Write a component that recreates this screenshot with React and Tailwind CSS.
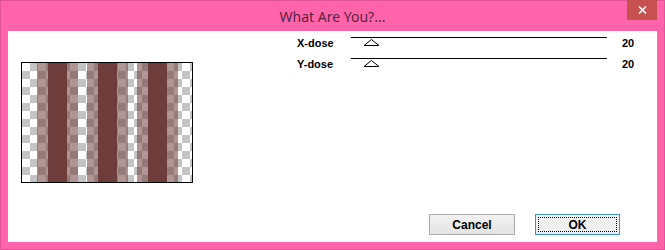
import React from "react";

function Preview() {
  const stripes = [0, 50, 100];
  return (
    <svg width="170" height="119" viewBox="0 0 170 119" className="block">
      <defs>
        <pattern id="chk" width="16" height="16" patternUnits="userSpaceOnUse">
          <rect width="16" height="16" fill="#c3c3c3" />
          <rect x="0" y="0" width="8" height="8" fill="#ffffff" />
          <rect x="8" y="8" width="8" height="8" fill="#ffffff" />
        </pattern>
        <filter id="soft" x="0" y="0" width="100%" height="100%">
          <feGaussianBlur stdDeviation="0.5" />
        </filter>
      </defs>
      <g filter="url(#soft)">
        <rect width="170" height="119" fill="url(#chk)" />
        {stripes.map((o) => (
          <g key={o}>
            <rect x={15 + o} y="0" width="11" height="119" fill="#6e3e3b" opacity="0.55" />
            <rect x={26 + o} y="0" width="19" height="119" fill="#6e3e3b" />
            <rect x={45 + o} y="0" width="11" height="119" fill="#6e3e3b" opacity="0.55" />
          </g>
        ))}
      </g>
    </svg>
  );
}

function SliderRow({ label, value }) {
  return (
    <div className="flex h-[21px] items-center">
      <div className="w-[54px] text-[11px] font-bold text-black">{label}</div>
      <div className="relative h-[21px] w-[256px]">
        <div className="absolute left-0 right-0 top-[4px] h-px bg-black" />
        <svg
          className="absolute left-[12px] top-[6px]"
          width="17"
          height="7"
          viewBox="0 0 17 7"
        >
          <path d="M8.5 0.5 L16 6.5 L1 6.5 Z" fill="white" stroke="black" strokeWidth="1" />
        </svg>
      </div>
      <div className="ml-[15px] text-[11px] font-bold text-black">{value}</div>
    </div>
  );
}

export default function App() {
  return (
    <div
      className="flex h-[250px] w-[665px] flex-col border border-[#e2549a] bg-[#ff63a9]"
      style={{ fontFamily: '"Liberation Sans", Arial, sans-serif' }}
    >
      <div className="relative flex h-[30px] items-center justify-center">
        <span
          className="text-[14px] text-[#5a2343]"
          style={{ fontFamily: '"Noto Sans", "Open Sans", sans-serif' }}
        >
          What Are You?...
        </span>
        <div className="absolute right-[7px] top-[-1px] flex h-[20px] w-[30px] items-center justify-center bg-[#c75050]">
          <svg width="9" height="8" viewBox="0 0 9 8">
            <path d="M1 0.5 L8 7.5 M8 0.5 L1 7.5" stroke="white" strokeWidth="1.6" />
          </svg>
        </div>
      </div>
      <div className="mx-[7px] mb-[7px] flex flex-1 flex-col bg-white pl-[13px]">
        <div className="flex items-start">
          <div className="mt-[31px] h-[121px] w-[172px] border border-black">
            <Preview />
          </div>
          <div className="ml-[104px] mt-[2px] flex flex-col">
            <SliderRow label="X-dose" value="20" />
            <SliderRow label="Y-dose" value="20" />
          </div>
        </div>
        <div className="mt-auto mb-[7px] flex gap-[20px] pl-[408px]">
          <button className="flex h-[21px] w-[86px] items-center justify-center border border-[#acacac] bg-gradient-to-b from-[#f2f2f2] to-[#e3e3e3] text-[12px] font-bold text-black">
            Cancel
          </button>
          <button className="flex h-[21px] w-[85px] items-center justify-center border border-[#3c8fd8] bg-gradient-to-b from-[#f4f4f4] to-[#ececec] p-[2px] text-[12px] font-bold text-black">
            <span className="flex h-full w-full items-center justify-center border border-dotted border-black">
              OK
            </span>
          </button>
        </div>
      </div>
    </div>
  );
}
